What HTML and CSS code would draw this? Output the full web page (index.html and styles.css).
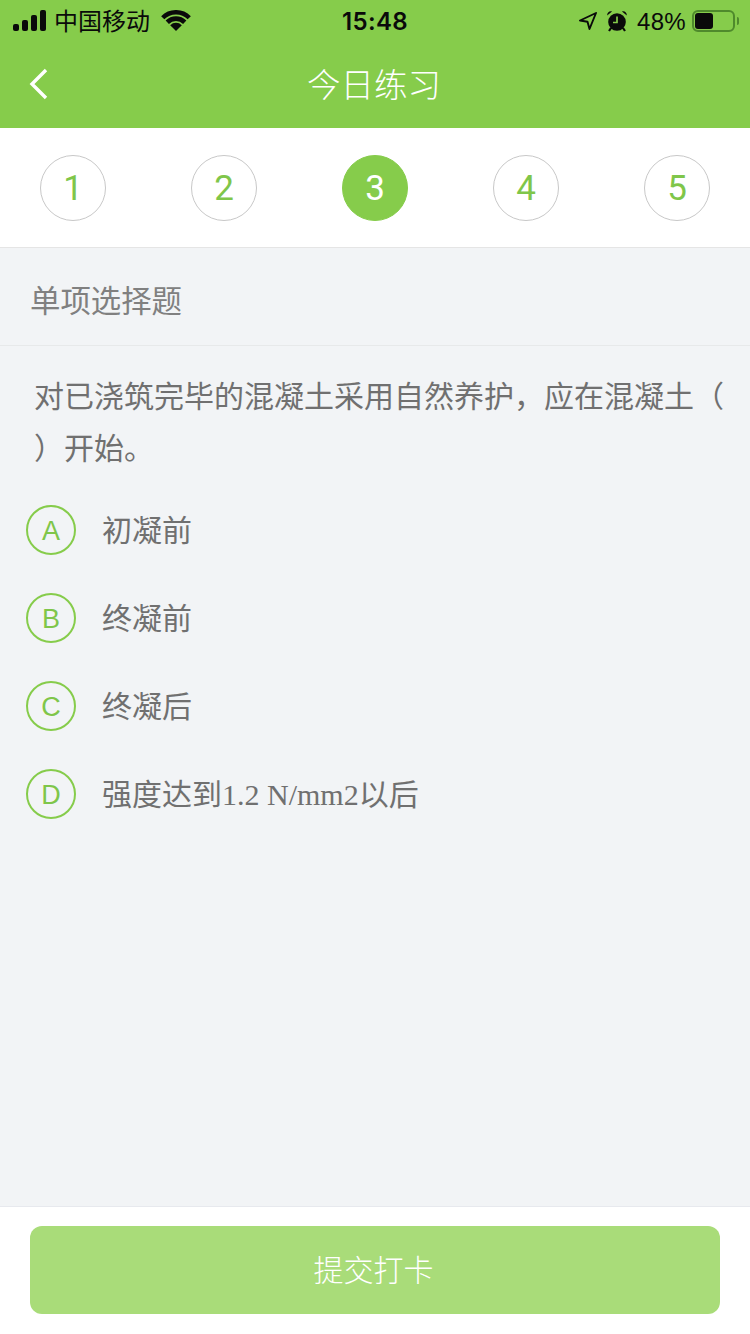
FILE: index.html
```html
<!DOCTYPE html>
<html lang="zh-CN">
<head>
<meta charset="utf-8">
<title>今日练习</title>
<link rel="stylesheet" href="styles.css">
</head>
<body>
<div class="page">
  <header class="header">
    <div class="status">
      <div class="status-left">
        <svg class="signal" width="34" height="21" viewBox="0 0 34 21"><rect x="0" y="14" width="6" height="7" rx="2"/><rect x="9" y="10" width="6" height="11" rx="2"/><rect x="18" y="5" width="6" height="16" rx="2"/><rect x="27" y="0" width="6" height="21" rx="2"/></svg>
        <span class="carrier">中国移动</span>
        <svg class="wifi" width="30" height="21" viewBox="0 0 30 21"><path d="M1.740 7.740A18.750 18.750 0 0 1 28.260 7.740" fill="none" stroke="#0a0a0a" stroke-width="4.500"/><path d="M6.270 12.270A12.350 12.350 0 0 1 23.730 12.270" fill="none" stroke="#0a0a0a" stroke-width="4.700"/><path d="M9.200 15.200A8.200 8.200 0 0 1 20.800 15.200L15 21z" fill="#0a0a0a"/></svg>
      </div>
      <span class="time">15:48</span>
      <div class="status-right">
        <svg class="arrow" width="18" height="18" viewBox="0 0 18 18"><path d="M17 1 1 8.500l7.500 1.200L10.500 17z" fill="none" stroke="#0a0a0a" stroke-width="1.900" stroke-linejoin="round"/></svg>
        <svg class="alarm" width="22" height="22" viewBox="0 0 22 22"><circle cx="11" cy="12" r="8.800" fill="#0a0a0a"/><path d="M1.200 5.500C1 2.500 3.500.8 6 1.500zM20.800 5.500C21 2.500 18.500.8 16 1.500z" fill="#0a0a0a"/><path d="M5 18l-2 3M17 18l2 3" stroke="#0a0a0a" stroke-width="2.200" fill="none"/><path d="M11 6.500v6H7" stroke="#86cc4b" stroke-width="1.700" fill="none"/></svg>
        <span class="percent">48%</span>
        <div class="battery"><div class="battery-fill"></div></div>
        <div class="battery-cap"></div>
      </div>
    </div>
    <div class="nav">
      <svg class="back" width="20" height="32" viewBox="0 0 20 32"><path d="M17 2 3 16l14 14" fill="none" stroke="#fff" stroke-width="3.400"/></svg>
      <h1 class="title">今日练习</h1>
    </div>
  </header>

  <nav class="steps">
    <span class="step">1</span>
    <span class="step">2</span>
    <span class="step step-active">3</span>
    <span class="step">4</span>
    <span class="step">5</span>
  </nav>

  <main class="main">
    <div class="kind">单项选择题</div>
    <p class="question">对已浇筑完毕的混凝土采用自然养护，应在混凝土（ ）开始。</p>
    <ul class="options">
      <li class="option"><span class="letter">A</span><span class="answer">初凝前</span></li>
      <li class="option"><span class="letter">B</span><span class="answer">终凝前</span></li>
      <li class="option"><span class="letter">C</span><span class="answer">终凝后</span></li>
      <li class="option"><span class="letter">D</span><span class="answer">强度达到<span class="serif">1.2 N/mm2</span>以后</span></li>
    </ul>
  </main>

  <footer class="footer">
    <button class="submit" type="button">提交打卡</button>
  </footer>
</div>
</body>
</html>
```
FILE: styles.css
```css
* { box-sizing: border-box; }
html, body { margin: 0; padding: 0; }
body {
  font-family: "Liberation Sans", "Noto Sans CJK SC", sans-serif;
  background: #f2f4f6;
}
.page {
  width: 750px;
  height: 1334px;
  display: flex;
  flex-direction: column;
  overflow: hidden;
}
.header { background: #86cc4b; height: 128px; }
.status {
  height: 40px;
  padding: 0 11px 0 13px;
  display: flex;
  align-items: center;
  position: relative;
  color: #0a0a0a;
}
.status-left { display: flex; align-items: center; flex: 1; }
.signal { fill: #0a0a0a; margin-right: 8px; }
.carrier { font-size: 24px; line-height: 40px; padding-top: 4px; margin-left: -1px; }
.wifi { margin-left: 11px; }
.time {
  font-family: Inter, "Liberation Sans", sans-serif;
  font-size: 24px;
  font-weight: 600;
  letter-spacing: 0.400px;
  padding: 2px 2px 0 0;
  flex: 0 0 auto;
}
.status-right { display: flex; align-items: center; flex: 1; justify-content: flex-end; padding-top: 1px; }
.alarm { margin-left: 9px; }
.percent {
  font-size: 24px;
  letter-spacing: 0.300px;
  margin-left: 9px;
  padding-top: 2px;
}
.battery {
  width: 43px;
  height: 22px;
  margin-left: 6px;
  border: 2px solid #4f8a2c;
  border-radius: 6px;
  padding: 1px;
}
.battery-fill { width: 18px; height: 16px; background: #0a0a0a; border-radius: 3px; }
.battery-cap { width: 2px; height: 8px; margin-left: 2px; background: #4f8a2c; border-radius: 0 2px 2px 0; }
.nav {
  height: 88px;
  display: flex;
  align-items: center;
  justify-content: center;
  position: relative;
}
.back { position: absolute; left: 29px; top: 28px; }
.title { margin: 0 2px 4px 0; color: #fff; font-size: 33.500px; font-weight: 300; }

.steps {
  height: 120px;
  background: #fff;
  border-bottom: 1px solid #e5e5e5;
  padding: 0 40px 0;
  display: flex;
  justify-content: space-between;
  align-items: center;
  flex: 0 0 auto;
}
.step {
  width: 66px;
  height: 66px;
  padding-top: 2px;
  border: 1px solid #c8c8c8;
  border-radius: 50%;
  color: #7fc64a;
  font-family: Roboto, "Liberation Sans", sans-serif;
  font-size: 35px;
  font-weight: 400;
  display: flex;
  align-items: center;
  justify-content: center;
}
.step-active { background: #86cc4b; border-color: #86cc4b; color: #fff; }

.main { flex: 1; background: #f2f4f6; }
.kind {
  height: 98px;
  padding: 4px 0 0 30px;
  border-bottom: 1px solid #e7e9ea;
  display: flex;
  align-items: center;
  color: #808080;
  font-size: 30.400px;
}
.question {
  margin: 0;
  padding: 25px 26px 0 34px;
  color: #707070;
  font-size: 30px;
  line-height: 52px;
}
.options { list-style: none; margin: 0; padding: 11px 0 0 26px; }
.option { height: 88px; display: flex; align-items: center; }
.letter {
  width: 50px;
  height: 50px;
  padding-top: 2px;
  border: 2px solid #86cc4b;
  border-radius: 50%;
  color: #7fc64a;
  font-size: 27px;
  display: flex;
  align-items: center;
  justify-content: center;
}
.answer { margin-left: 26px; padding-bottom: 4px; color: #707070; font-size: 30px; }
.serif { font-family: "Liberation Serif", serif; }

.footer {
  height: 128px;
  background: #fff;
  border-top: 1px solid #e7e9ee;
  padding: 19px 30px 0;
  flex: 0 0 auto;
}
.submit {
  width: 690px;
  height: 88px;
  border: 0;
  padding: 0 3px 4px 0;
  border-radius: 12px;
  background: #a9dc79;
  color: #fff;
  font-family: inherit;
  font-size: 30px;
  font-weight: 300;
  display: block;
}
```
